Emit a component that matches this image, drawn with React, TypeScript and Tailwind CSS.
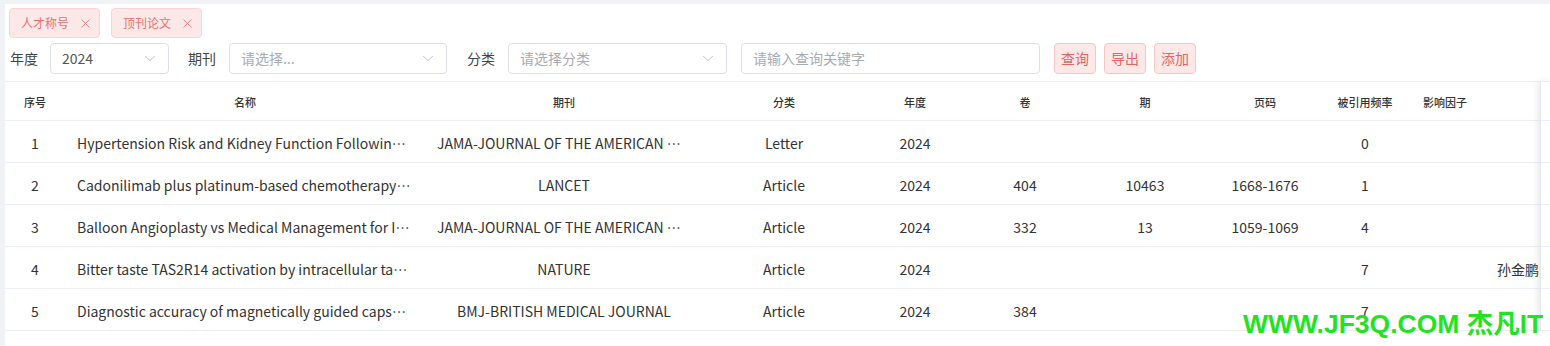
import { X } from 'lucide-react';

const font = { fontFamily: '"Noto Sans CJK SC", "Noto Sans", sans-serif' };

const rows = [
  {
    no: '1',
    name: 'Hypertension Risk and Kidney Function Following Living Kidney Donation',
    journal: 'JAMA-JOURNAL OF THE AMERICAN MEDICAL ASSOCIATION',
    type: 'Letter',
    year: '2024',
    vol: '',
    issue: '',
    pages: '',
    cited: '0',
    impact: '',
    extra: '',
  },
  {
    no: '2',
    name: 'Cadonilimab plus platinum-based chemotherapy with or without bevacizumab',
    journal: 'LANCET',
    type: 'Article',
    year: '2024',
    vol: '404',
    issue: '10463',
    pages: '1668-1676',
    cited: '1',
    impact: '',
    extra: '',
  },
  {
    no: '3',
    name: 'Balloon Angioplasty vs Medical Management for Intracranial Artery Stenosis',
    journal: 'JAMA-JOURNAL OF THE AMERICAN MEDICAL ASSOCIATION',
    type: 'Article',
    year: '2024',
    vol: '332',
    issue: '13',
    pages: '1059-1069',
    cited: '4',
    impact: '',
    extra: '',
  },
  {
    no: '4',
    name: 'Bitter taste TAS2R14 activation by intracellular tastants and cholesterol',
    journal: 'NATURE',
    type: 'Article',
    year: '2024',
    vol: '',
    issue: '',
    pages: '',
    cited: '7',
    impact: '',
    extra: '孙金鹏;',
  },
  {
    no: '5',
    name: 'Diagnostic accuracy of magnetically guided capsule endoscopy',
    journal: 'BMJ-BRITISH MEDICAL JOURNAL',
    type: 'Article',
    year: '2024',
    vol: '384',
    issue: '',
    pages: '',
    cited: '7',
    impact: '',
    extra: '',
  },
];

const cols = 'grid grid-cols-[60px_360px_278px_162px_100px_120px_120px_120px_80px_80px_120px]';

function Chevron() {
  return (
    <svg width="12" height="7" viewBox="0 0 12 7" fill="none" className="shrink-0">
      <path d="M1 1L6 5.5L11 1" stroke="#c0c4cc" strokeWidth="1" />
    </svg>
  );
}

function Tag({ label }: { label: string }) {
  return (
    <div className="flex h-[30px] w-[91px] items-center gap-[9px] rounded-[4px] border border-[#fad4d4] bg-[#fde8e8] pl-[11px] text-[12px] text-[#e57373]">
      <span>{label}</span>
      <X size={15} strokeWidth={1.3} />
    </div>
  );
}

function Select({ value, placeholder, width }: { value?: string; placeholder?: string; width: string }) {
  return (
    <div
      className={`flex h-[31px] items-center justify-between rounded-[4px] border border-[#dcdfe6] bg-white pl-[11px] pr-[12px] text-[14px] ${width}`}
    >
      <span className={value ? 'text-[#555]' : 'text-[#a8abb2]'}>{value ?? placeholder}</span>
      <Chevron />
    </div>
  );
}

function Btn({ label }: { label: string }) {
  return (
    <button className="flex h-[31px] w-[42px] items-center justify-center rounded-[4px] border border-[#f6c6c6] bg-[#fde8e8] text-[14px] text-[#e06565]">
      {label}
    </button>
  );
}

export default function App() {
  return (
    <div className="relative h-[346px] w-[1550px] overflow-hidden bg-[#f0f2f5] pl-[5px] pt-1" style={font}>
      <div className="h-full bg-white">
        <div className="flex gap-[11px] pl-1 pt-1">
          <Tag label="人才称号" />
          <Tag label="顶刊论文" />
        </div>

        <div className="mt-[5px] flex items-center pl-[5px] text-[14px] text-[#444]">
          <span className="mr-[12px]">年度</span>
          <Select value="2024" width="w-[119px]" />
          <span className="ml-[19px] mr-[13px]">期刊</span>
          <Select placeholder="请选择..." width="w-[218px]" />
          <span className="ml-[20px] mr-[13px]">分类</span>
          <Select placeholder="请选择分类" width="w-[219px]" />
          <div className="ml-[14px] flex h-[31px] w-[299px] items-center rounded-[4px] border border-[#dcdfe6] pl-[11px] text-[#a8abb2]">
            请输入查询关键字
          </div>
          <div className="ml-[14px] flex gap-[8px]">
            <Btn label="查询" />
            <Btn label="导出" />
            <Btn label="添加" />
          </div>
        </div>

        <div className="mt-[7px] flex">
          <div className="w-[1535px] overflow-hidden">
            <div className={`${cols} h-[40px] items-center border-y border-[#ebeef5] pt-[2px] text-[11px] font-medium text-[#333]`}>
              <div className="text-center">序号</div>
              <div className="text-center">名称</div>
              <div className="text-center">期刊</div>
              <div className="text-center">分类</div>
              <div className="text-center">年度</div>
              <div className="text-center">卷</div>
              <div className="text-center">期</div>
              <div className="text-center">页码</div>
              <div className="text-center">被引用频率</div>
              <div className="text-center">影响因子</div>
              <div></div>
            </div>
            {rows.map((r) => (
              <div
                key={r.no}
                className={`${cols} h-[42px] items-center border-b border-[#ebeef5] pt-[3px] text-[14px] text-[#333]`}
              >
                <div className="text-center">{r.no}</div>
                <div className="truncate px-3">{r.name}</div>
                <div className="truncate px-3 text-center">{r.journal}</div>
                <div className="text-center">{r.type}</div>
                <div className="text-center">{r.year}</div>
                <div className="text-center">{r.vol}</div>
                <div className="text-center">{r.issue}</div>
                <div className="text-center">{r.pages}</div>
                <div className="text-center">{r.cited}</div>
                <div className="text-center">{r.impact}</div>
                <div className="whitespace-nowrap pl-3">{r.extra}</div>
              </div>
            ))}
          </div>
          <div className="w-[10px] border-l border-[#e4e7ed] shadow-[-3px_0_6px_rgba(0,0,0,0.08)]">
            <div className="h-[40px] border-y border-[#ebeef5]"></div>
            {rows.map((r) => (
              <div key={r.no} className="h-[42px] border-b border-[#ebeef5]"></div>
            ))}
          </div>
        </div>
      </div>

      <div
        className="absolute left-[1243px] top-[306px] whitespace-nowrap text-[26.5px] font-bold leading-[36px] text-[#22e322]"
        style={{ fontFamily: '"Liberation Sans", "Noto Sans CJK SC", sans-serif' }}
      >
        WWW.JF3Q.COM 杰凡IT
      </div>
    </div>
  );
}
